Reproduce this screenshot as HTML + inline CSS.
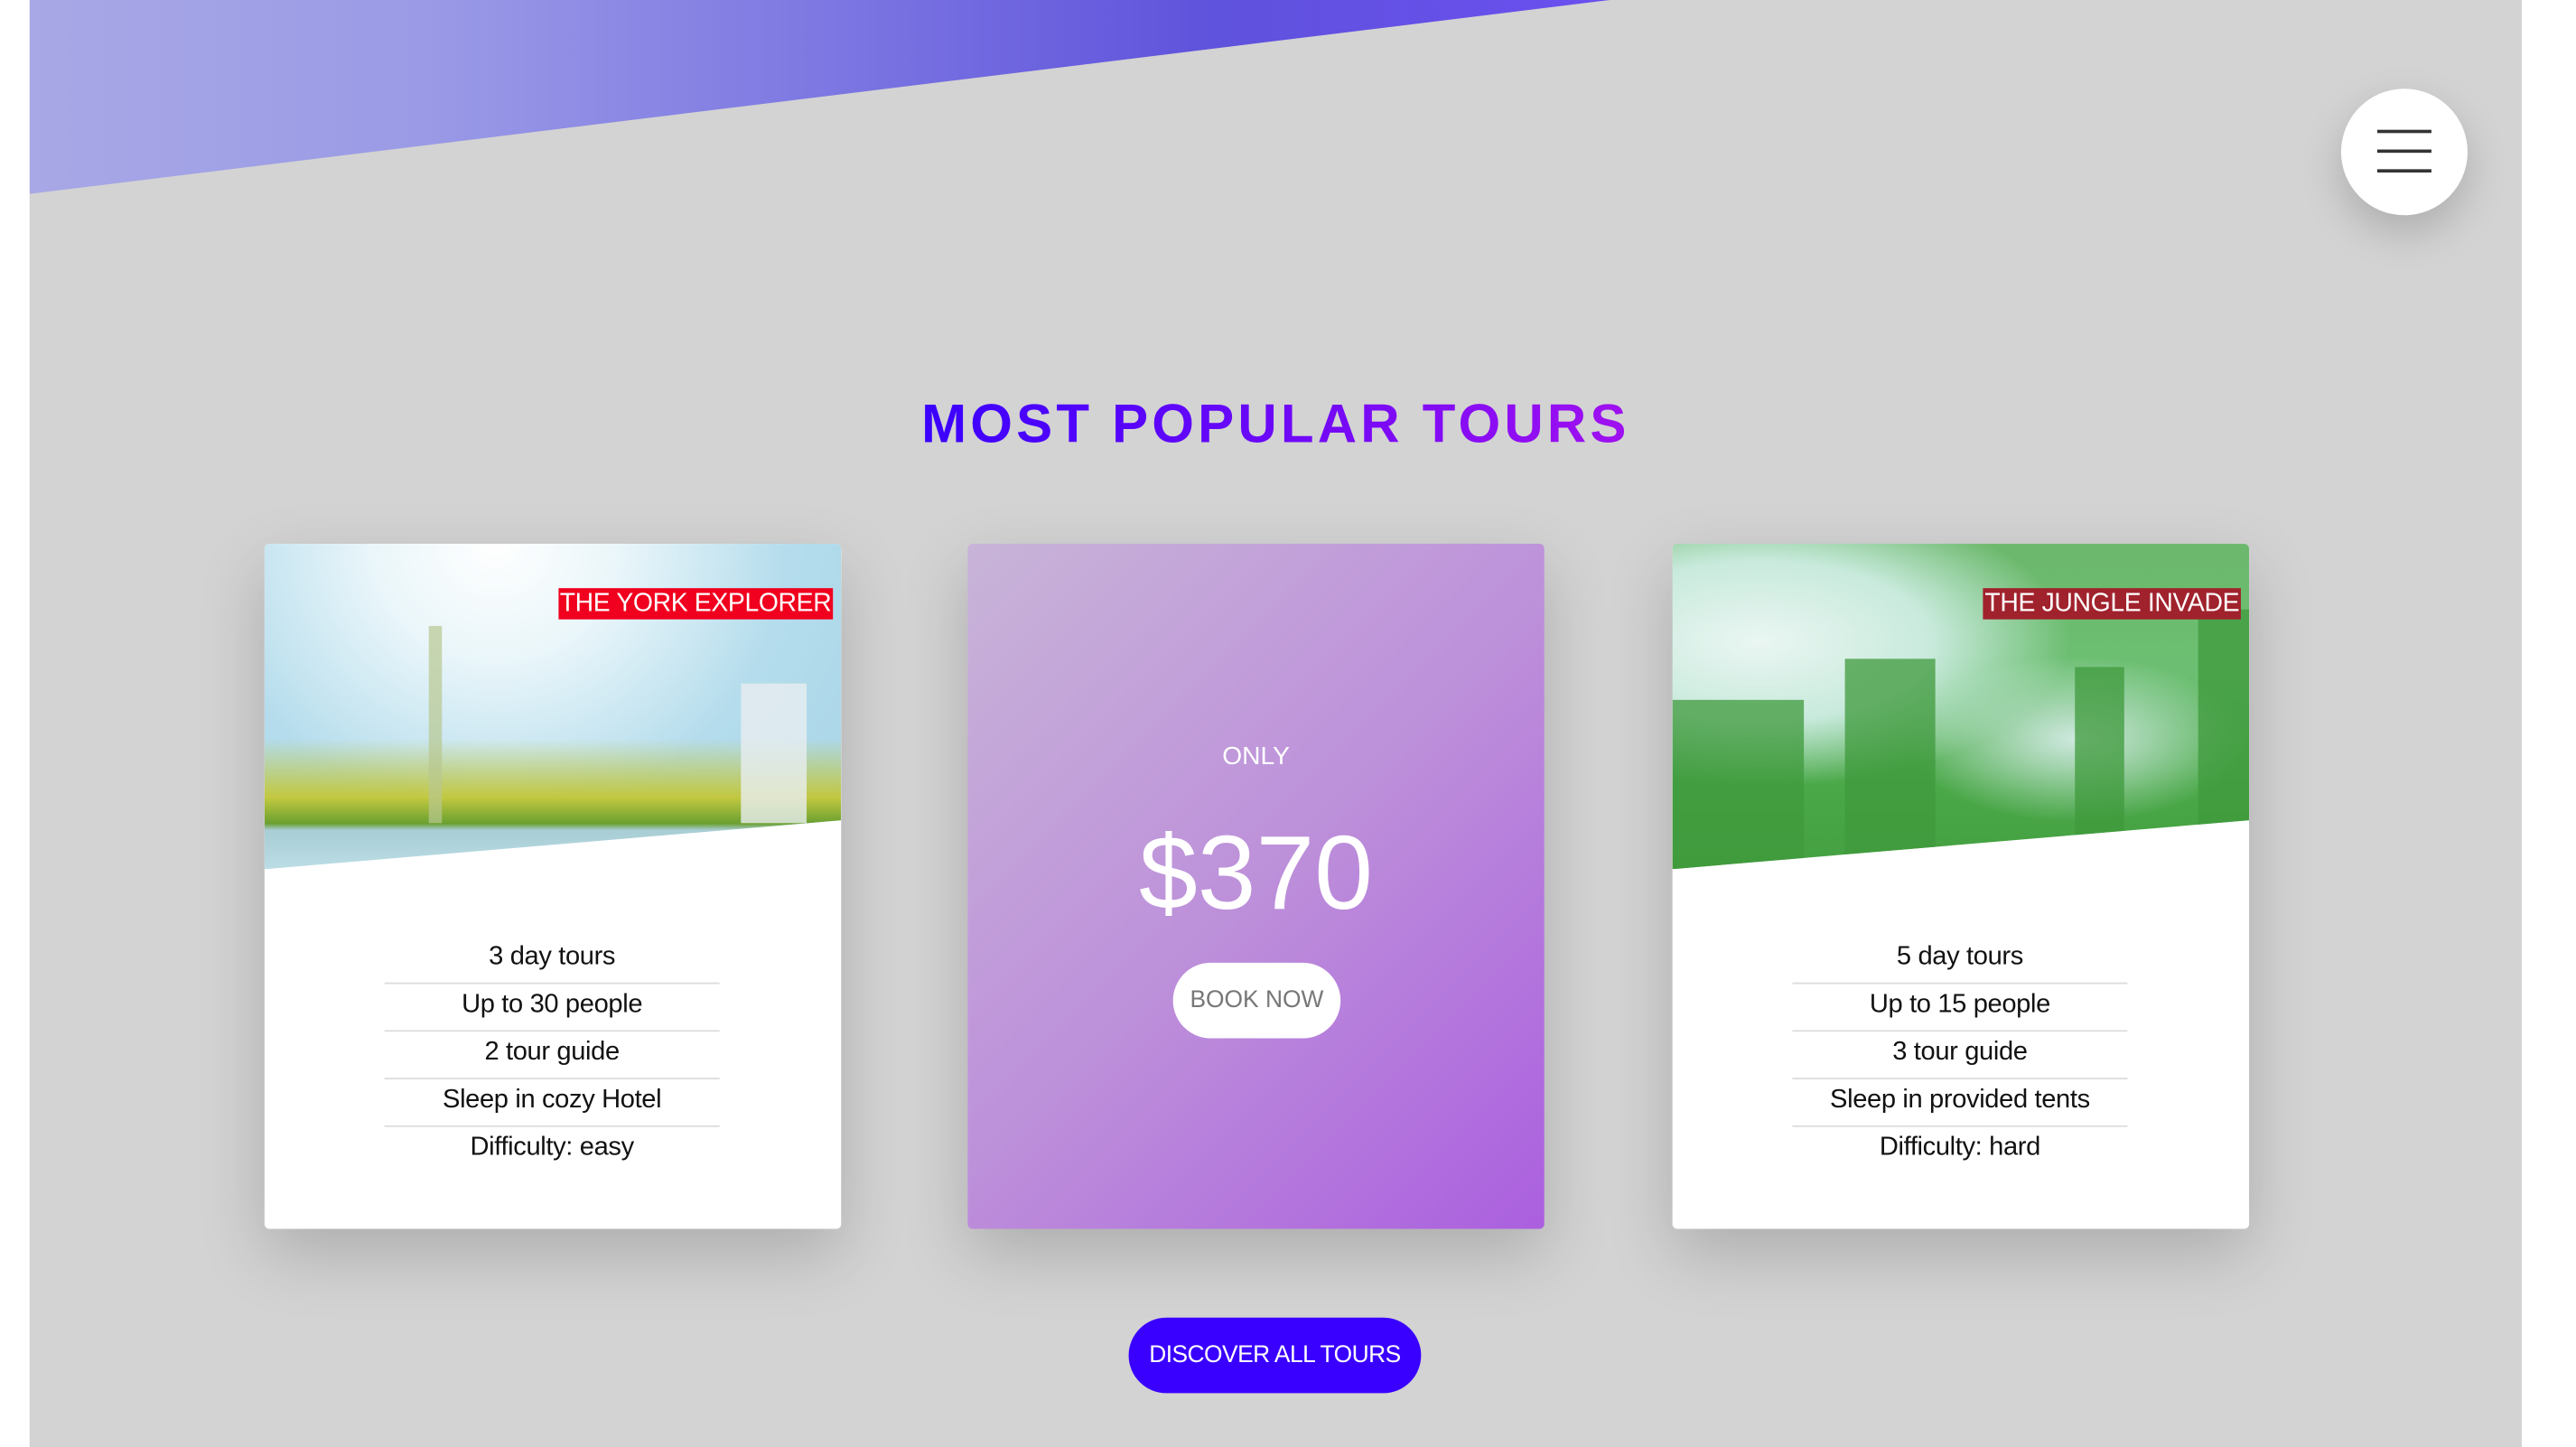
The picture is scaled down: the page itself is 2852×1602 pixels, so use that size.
<!DOCTYPE html>
<html><head><meta charset="utf-8"><style>
html,body{margin:0;padding:0;width:2852px;height:1602px;overflow:hidden;background:#fff}
#w{position:absolute;left:0;top:0;width:1568px;height:881px;transform:scale(1.81888);transform-origin:0 0;font-family:"Liberation Sans",Arial,sans-serif}
.main{position:absolute;left:18px;top:0;width:1517px;height:881px;background:#d3d3d3;overflow:hidden}
.hero{position:absolute;left:0;top:0;width:962px;height:118px;clip-path:polygon(0 0,100% 0,0 100%);
background:linear-gradient(90deg,#a8a8e6 0%,#9a9ae6 25%,#7d78e2 50%,#5f52dc 75%,#6a4ff0 100%)}
.menu{position:absolute;left:1407px;top:54px;width:77px;height:77px;border-radius:50%;background:#fff;box-shadow:0 10px 25px rgba(0,0,0,.18)}
.menu i{position:absolute;left:22px;width:33px;height:2px;background:#333}
h2{position:absolute;left:0;width:1517px;top:238px;margin:0;text-align:center;font-size:33px;font-weight:bold;letter-spacing:2.3px;line-height:40px}
h2 span{background:linear-gradient(90deg,#3a00ff,#a010f0);-webkit-background-clip:text;background-clip:text;color:transparent}
.card{position:absolute;top:331px;width:351px;height:417px;background:#fff;border-radius:3px;box-shadow:0 15px 40px rgba(0,0,0,.18);overflow:hidden}
.img{position:absolute;left:0;top:0;width:351px;height:198px;clip-path:polygon(0 0,100% 0,100% 85%,0 100%)}
.lab{position:absolute;right:5px;top:27px;color:#fff;font-size:15.6px;line-height:19px;padding:0 1px;letter-spacing:-.2px}
ul{list-style:none;margin:0;padding:0;position:absolute;left:73px;width:204px;top:239px}
li{text-align:center;font-size:16px;height:28px;line-height:26px;border-bottom:1.5px solid #ddd;color:#111;letter-spacing:-.2px}
li:last-child{border:none}
.mid{background:linear-gradient(135deg,#c8b4d8 0%,#bd90da 50%,#ab5fdf 100%)}
.btn{position:absolute;border-radius:24px;text-align:center}
.sp{position:absolute;background:#3f9a3c;opacity:.75}
</style></head><body><div id="w">
<div class="main">
<div class="hero"></div>
<div class="menu"><i style="top:25px"></i><i style="top:37px"></i><i style="top:49px"></i></div>
<h2><span>MOST POPULAR TOURS</span></h2>

<div class="card" style="left:143px">
<div class="img" style="background:
linear-gradient(180deg,rgba(0,0,0,0) 60%,#c2c840 78%,#6aa030 86%,#a8cdd4 88%,#bcdde6 100%),
radial-gradient(ellipse at 40% 0%,#ffffff 0%,#eaf6fa 25%,#b4dcec 60%,#a6d4e6 100%);"></div>
<div style="position:absolute;left:100px;top:50px;width:8px;height:120px;background:#b8c890;opacity:.7"></div>
<div style="position:absolute;left:290px;top:85px;width:40px;height:85px;background:#e8eef0;opacity:.8"></div>
<div class="lab" style="background:#f0001e">THE YORK EXPLORER</div>
<ul><li>3 day tours</li><li>Up to 30 people</li><li>2 tour guide</li><li>Sleep in cozy Hotel</li><li>Difficulty: easy</li></ul>
</div>

<div class="card mid" style="left:571px">
<div style="position:absolute;top:121px;width:100%;text-align:center;color:#fff;font-size:15.5px">ONLY</div>
<div style="position:absolute;top:162px;width:100%;text-align:center;color:#fff;font-size:64px;font-weight:300;line-height:76px">$370</div>
<div class="btn" style="left:125px;top:255px;width:102px;height:46px;background:#fff;color:#777;font-size:14.5px;line-height:46px">BOOK NOW</div>
</div>

<div class="card" style="left:1000px">
<div class="img" style="background:
radial-gradient(ellipse at 15% 30%,#eaf6f2 0%,#c8eadc 25%,rgba(160,220,190,0) 45%),
radial-gradient(ellipse at 70% 60%,#cfe9e0 0%,rgba(200,230,215,0) 30%),
linear-gradient(180deg,#6cb86c 0%,#6cbf72 40%,#4aa848 75%,#44a040 100%)">
<div class="sp" style="left:105px;top:70px;width:55px;height:130px"></div>
<div class="sp" style="left:0;top:95px;width:80px;height:110px"></div>
<div class="sp" style="left:245px;top:75px;width:30px;height:110px"></div>
<div class="sp" style="left:320px;top:40px;width:31px;height:140px"></div>
</div>
<div class="lab" style="background:#a0222c">THE JUNGLE INVADE</div>
<ul><li>5 day tours</li><li>Up to 15 people</li><li>3 tour guide</li><li>Sleep in provided tents</li><li>Difficulty: hard</li></ul>
</div>

<div class="btn" style="left:669px;top:802px;width:178px;height:46px;background:#3a00ff;color:#fff;font-size:14.5px;line-height:46px;letter-spacing:-.3px">DISCOVER ALL TOURS</div>
</div>
</div></body></html>
